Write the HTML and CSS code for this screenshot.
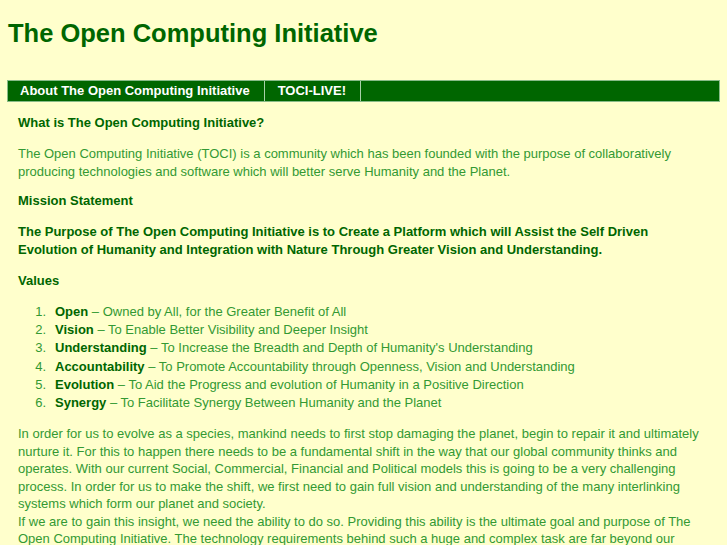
FILE: index.html
```html
<!DOCTYPE html>
<html>
<head>
<meta charset="utf-8">
<title>The Open Computing Initiative</title>
<link rel="stylesheet" href="styles.css">
</head>
<body>
<h1 class="site-title">The Open Computing Initiative</h1>
<nav class="menu">
  <a class="menu-item" href="#">About The Open Computing Initiative</a>
  <a class="menu-item" href="#">TOCI-LIVE!</a>
  <span class="menu-fill"></span>
</nav>
<main class="content">
  <h2 class="heading">What is The Open Computing Initiative?</h2>
  <p class="text">The Open Computing Initiative (TOCI) is a community which has been founded with the purpose of collaboratively producing technologies and software which will better serve Humanity and the Planet.</p>
  <h2 class="heading">Mission Statement</h2>
  <p class="statement">The Purpose of The Open Computing Initiative is to Create a Platform which will Assist the Self Driven Evolution of Humanity and Integration with Nature Through Greater Vision and Understanding.</p>
  <h2 class="heading">Values</h2>
  <ol class="values">
    <li><strong>Open</strong> – Owned by All, for the Greater Benefit of All</li>
    <li><strong>Vision</strong> – To Enable Better Visibility and Deeper Insight</li>
    <li><strong>Understanding</strong> – To Increase the Breadth and Depth of Humanity's Understanding</li>
    <li><strong>Accountability</strong> – To Promote Accountability through Openness, Vision and Understanding</li>
    <li><strong>Evolution</strong> – To Aid the Progress and evolution of Humanity in a Positive Direction</li>
    <li><strong>Synergy</strong> – To Facilitate Synergy Between Humanity and the Planet</li>
  </ol>
  <p class="text">In order for us to evolve as a species, mankind needs to first stop damaging the planet, begin to repair it and ultimately nurture it. For this to happen there needs to be a fundamental shift in the way that our global community thinks and operates. With our current Social, Commercial, Financial and Political models this is going to be a very challenging process. In order for us to make the shift, we first need to gain full vision and understanding of the many interlinking systems which form our planet and society.<br>If we are to gain this insight, we need the ability to do so. Providing this ability is the ultimate goal and purpose of The Open Computing Initiative. The technology requirements behind such a huge and complex task are far beyond our current capabilities and it is going to take a great deal of collaboration to achieve.</p>
</main>
</body>
</html>
```
FILE: styles.css
```css
html, body {
  background: #ffffcc;
}
body {
  margin: 0 7px;
  font-family: "Liberation Sans", Arial, sans-serif;
  font-size: 13px;
  line-height: 18px;
  color: #339933;
}
.site-title {
  margin: 0;
  padding: 18px 0 0 1px;
  height: 80px;
  box-sizing: border-box;
  font-size: 25.5px;
  line-height: 30px;
  font-weight: bold;
  color: #006600;
}
.menu {
  display: flex;
  height: 22px;
  background: #006600;
  border: 1px solid #88bb88;
  box-sizing: border-box;
}
.menu-item {
  display: block;
  padding: 0 14px 0 12px;
  line-height: 20px;
  color: #ffffff;
  font-weight: bold;
  text-decoration: none;
  border-right: 1px solid #a8d0a8;
}
.menu-item + .menu-item {
  padding: 0 14px 0 13px;
}
.menu-fill {
  flex: 1;
}
.content {
  padding: 4px 11px 0;
}
.heading {
  margin: 8px 0 13px;
  font-size: 13px;
  line-height: 18px;
  font-weight: bold;
  color: #006600;
}
.text {
  margin: 0 0 12px;
  line-height: 17.5px;
}
.statement {
  margin: 0 0 13px;
  font-weight: bold;
  color: #006600;
}
.values {
  margin: 0 0 13px;
  padding-left: 0;
  list-style: none;
  counter-reset: val;
}
.values li {
  line-height: 18.2px;
  counter-increment: val;
}
.values li::before {
  content: counter(val) ".";
  display: inline-block;
  width: 28px;
  margin-right: 9px;
  text-align: right;
}
.values strong {
  color: #006600;
}
```
